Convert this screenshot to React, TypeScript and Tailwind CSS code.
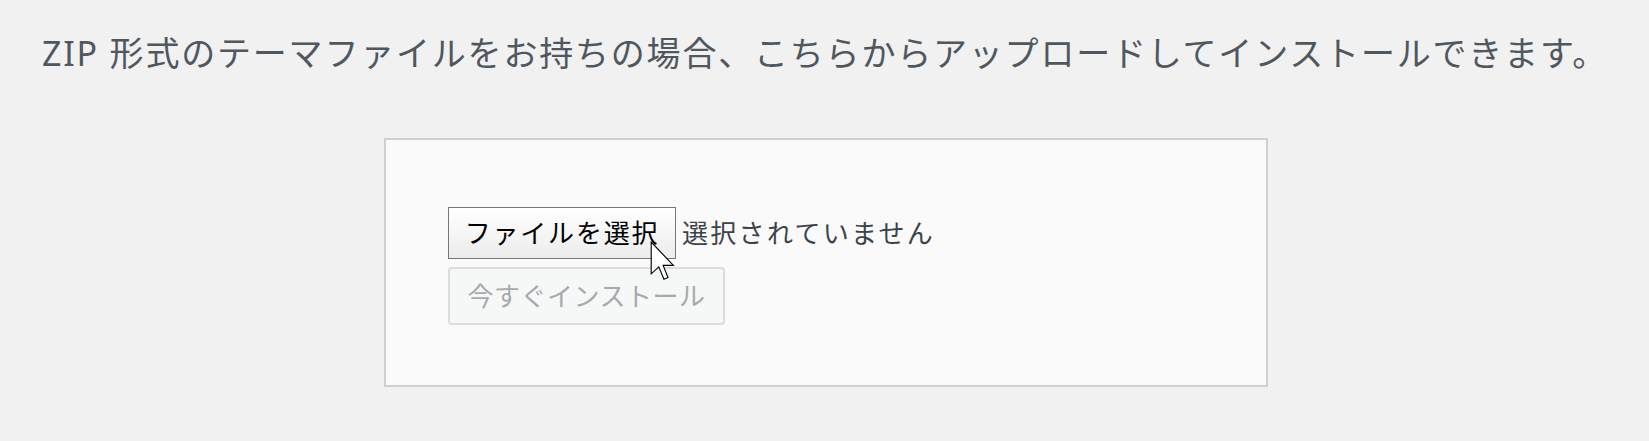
export default function App() {
  return (
    <div
      className="relative h-[441px] w-full overflow-hidden bg-[#f1f1f1]"
      style={{ fontFamily: '"Noto Sans", "Noto Sans CJK JP", sans-serif' }}
    >
      {/* intro line */}
      <p className="pl-[42px] pt-[36px] text-[34px] leading-[34px] tracking-[1.8px] text-[#50575e] whitespace-nowrap">
        ZIP 形式のテーマファイルをお持ちの場合、こちらからアップロードしてインストールできます。
      </p>

      {/* upload box */}
      <div className="mt-[68px] flex justify-center">
        <div className="ml-[3px] h-[249px] w-[884px] border-2 border-[#ccd0d4] bg-[#fafafa] pl-[62px] pt-[67px]">
          <div className="flex items-center">
            <button className="h-[52px] w-[228px] border border-[#767676] bg-gradient-to-b from-[#ffffff] to-[#ececec] text-[26px] leading-none tracking-[1.8px] text-black">
              ファイルを選択
            </button>
            <span className="ml-[6px] text-[26px] leading-none tracking-[2.3px] text-[#3c434a]">
              選択されていません
            </span>
          </div>
          <button
            disabled
            className="mt-[8px] h-[58px] w-[277px] rounded-[4px] border-2 border-[#dcdcde] bg-[#f6f7f7] text-[26px] leading-none tracking-[0.5px] text-[#a7aaad]"
          >
            今すぐインストール
          </button>
        </div>
      </div>

      {/* mouse pointer */}
      <svg
        className="absolute left-[650px] top-[241px]"
        width="26"
        height="40"
        viewBox="0 0 12.5 19.5"
      >
        <path
          d="M0.5 0.5 L0.5 16 L4.2 12.6 L6.7 18.6 L8.7 17.8 L6.3 11.9 L11.3 11.9 Z"
          fill="#ffffff"
          stroke="#000000"
          strokeWidth="0.55"
          strokeLinejoin="miter"
        />
      </svg>
    </div>
  );
}
